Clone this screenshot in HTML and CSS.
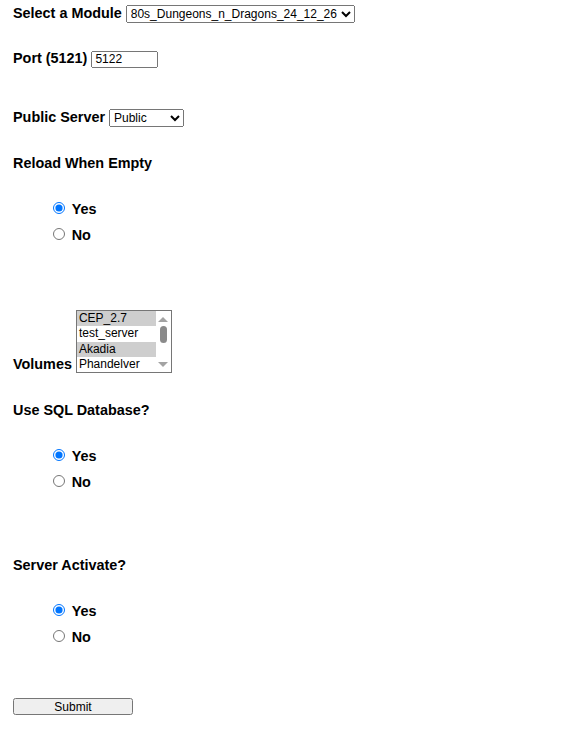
FILE: index.html
```html
<!DOCTYPE html>
<html>
<head>
<meta charset="utf-8">
<link rel="stylesheet" href="styles.css">
</head>
<body>
<form class="form">
  <div class="row row-module">
    <label class="lbl" for="module">Select a Module</label>
    <select id="module" class="ctl">
      <option>80s_Dungeons_n_Dragons_24_12_26</option>
    </select>
  </div>
  <div class="row row-port">
    <label class="lbl" for="port">Port (5121)</label>
    <input id="port" class="ctl port" type="text" value="5122">
  </div>
  <div class="row row-public">
    <label class="lbl" for="pub">Public Server</label>
    <select id="pub" class="ctl pub">
      <option>Public</option>
      <option>Private</option>
    </select>
  </div>
  <div class="row row-reload">
    <span class="lbl">Reload When Empty</span>
  </div>
  <ul class="radios radios-1">
    <li><label><input type="radio" name="reload" checked>Yes</label></li>
    <li><label><input type="radio" name="reload">No</label></li>
  </ul>
  <div class="row-volumes">
    <span class="lbl vol-lbl">Volumes</span>
    <div class="listbox" role="listbox" aria-multiselectable="true">
      <div class="scrollbar">
        <span class="arrow up"></span>
        <span class="thumb"></span>
        <span class="arrow down"></span>
      </div>
      <div class="option selected" role="option">CEP_2.7</div>
      <div class="option" role="option">test_server</div>
      <div class="option selected" role="option">Akadia</div>
      <div class="option" role="option">Phandelver</div>
    </div>
  </div>
  <div class="row row-sql">
    <span class="lbl">Use SQL Database?</span>
  </div>
  <ul class="radios radios-2">
    <li><label><input type="radio" name="sql" checked>Yes</label></li>
    <li><label><input type="radio" name="sql">No</label></li>
  </ul>
  <div class="row row-activate">
    <span class="lbl">Server Activate?</span>
  </div>
  <ul class="radios radios-3">
    <li><label><input type="radio" name="act" checked>Yes</label></li>
    <li><label><input type="radio" name="act">No</label></li>
  </ul>
  <input class="ctl submit" type="submit" value="Submit">
</form>
</body>
</html>
```
FILE: styles.css
```css
html, body {
  margin: 0;
  padding: 0;
  background: #fff;
}
body {
  font-family: "Liberation Sans", Arial, sans-serif;
  font-size: 14.4px;
  color: #000;
}
.form {
  padding: 4px 0 0 13px;
}
.row {
  line-height: 18px;
  height: 18px;
}
.lbl {
  font-weight: bold;
}
.ctl {
  font-family: "Liberation Sans", Arial, sans-serif;
  font-size: 12px;
  margin: 0;
}
.pub {
  width: 75px;
}
.port {
  width: 67px;
  height: 17px;
  box-sizing: border-box;
  padding: 1px 2px;
}
.row-port { margin-top: 27px; }
.row-public { margin-top: 41px; }
.row-reload { margin-top: 28px; }

.radios {
  list-style: none;
  margin: 28px 0 0 0;
  padding: 0 0 0 35px;
}
.radios li {
  line-height: 18px;
  height: 26px;
  font-weight: bold;
}
.radios input {
  width: 11.7px;
  height: 11.7px;
  margin: 0 7px 0 5px;
}

.row-volumes {
  margin-top: 58px;
  line-height: 18px;
}
.vol-lbl {
  vertical-align: -1px;
}
.listbox {
  display: inline-block;
  vertical-align: baseline;
  width: 96px;
  height: 63px;
  box-sizing: border-box;
  border: 1px solid #767676;
  background: #fff;
  font-size: 12px;
  line-height: 15.25px;
}
.option {
  height: 15.25px;
  margin-right: 15px;
  padding-left: 2px;
  white-space: nowrap;
}
.option.selected {
  background: #cecece;
}
.scrollbar {
  float: right;
  width: 15px;
  height: 61px;
  display: flex;
  flex-direction: column;
  align-items: center;
  justify-content: space-between;
  padding: 6px 0 5px;
  box-sizing: border-box;
  background: #fff;
}
.arrow {
  width: 0;
  height: 0;
  border-left: 5px solid transparent;
  border-right: 5px solid transparent;
}
.arrow.up {
  border-bottom: 5px solid #a3a3a3;
}
.arrow.down {
  border-top: 5px solid #a3a3a3;
}
.thumb {
  width: 7px;
  height: 17px;
  border-radius: 4px;
  background: #8a8a8a;
  margin-top: -8px;
  margin-bottom: 8px;
}

.row-sql { margin-top: 27.5px; }
.row-activate { margin-top: 57px; }
.submit {
  display: block;
  margin-top: 44px;
  width: 120px;
  height: 17px;
  padding: 0;
}
```
